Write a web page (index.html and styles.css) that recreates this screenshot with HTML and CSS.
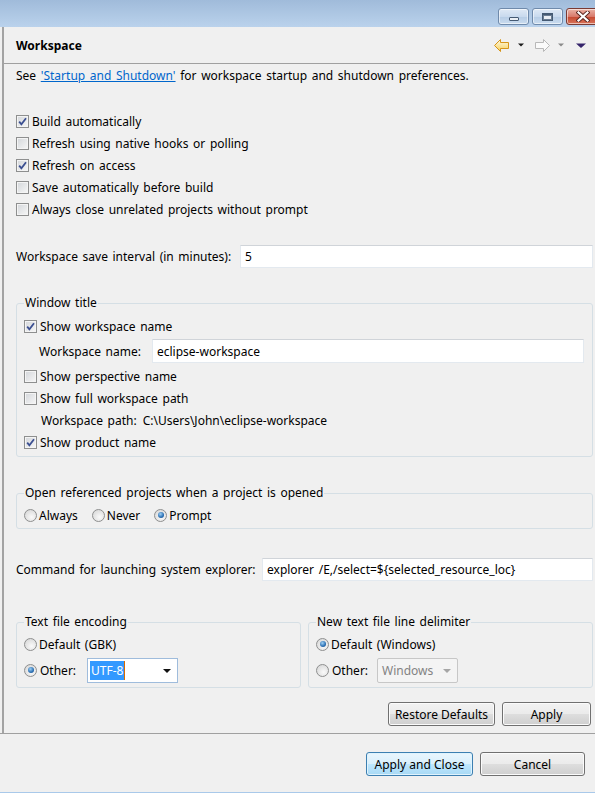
FILE: index.html
```html
<!DOCTYPE html>
<html>
<head>
<meta charset="utf-8">
<title>Workspace</title>
<link rel="stylesheet" href="styles.css">
</head>
<body>
<div class="window">
  <div class="titlebar">
    <div class="winbtns">
      <div class="wbtn wmin"><span class="min-glyph"></span></div>
      <div class="wbtn wmax"><span class="max-glyph"></span></div>
      <div class="wbtn wclose">
        <svg width="14" height="11" viewBox="0 0 14 11">
          <path d="M2.5 1.5 L11.5 9.5 M11.5 1.5 L2.5 9.5" stroke="#5a2620" stroke-width="4" stroke-linecap="square"/>
          <path d="M2.5 1.5 L11.5 9.5 M11.5 1.5 L2.5 9.5" stroke="#ffffff" stroke-width="2.2" stroke-linecap="square"/>
        </svg>
      </div>
    </div>
  </div>

  <div class="page">
    <div class="header">
      <h1 class="title">Workspace</h1>
      <div class="nav">
        <svg width="93" height="14" viewBox="0 0 93 14">
          <defs>
            <linearGradient id="bk" x1="0" y1="0" x2="0" y2="1">
              <stop offset="0" stop-color="#fffbe6"/>
              <stop offset="1" stop-color="#f6cf5a"/>
            </linearGradient>
          </defs>
          <path d="M0.5 6.5 L6.5 0.5 L6.5 3.5 L14.5 3.5 L14.5 9.5 L6.5 9.5 L6.5 12.5 Z" fill="url(#bk)" stroke="#d6951a" stroke-linejoin="round"/>
          <path d="M24 4.5 L30 4.5 L27 7.5 Z" fill="#1b1b1b"/>
          <path d="M55.5 6.5 L49.5 0.5 L49.5 3.5 L41.5 3.5 L41.5 9.5 L49.5 9.5 L49.5 12.5 Z" fill="#fafafa" stroke="#b8b8b8" stroke-linejoin="round"/>
          <path d="M64 4.5 L70 4.5 L67 7.5 Z" fill="#8a8a8a"/>
          <path d="M82 4.5 L92 4.5 L87 9 Z" fill="#35246b"/>
        </svg>
      </div>
    </div>

    <div class="content">
      <p class="intro">See <a class="link" href="#">'Startup and Shutdown'</a> for workspace startup and shutdown preferences.</p>

      <div class="checks">
        <div class="row"><span class="cb on"><svg width="11" height="11" viewBox="0 0 11 11"><path d="M2.2 5.6 L4.4 8.3 L9 2.2" fill="none" stroke="#3b4f91" stroke-width="1.8"/></svg></span>Build automatically</div>
        <div class="row"><span class="cb"></span>Refresh using native hooks or polling</div>
        <div class="row"><span class="cb on"><svg width="11" height="11" viewBox="0 0 11 11"><path d="M2.2 5.6 L4.4 8.3 L9 2.2" fill="none" stroke="#3b4f91" stroke-width="1.8"/></svg></span>Refresh on access</div>
        <div class="row"><span class="cb"></span>Save automatically before build</div>
        <div class="row"><span class="cb"></span>Always close unrelated projects without prompt</div>
      </div>

      <div class="field-row interval">
        <span class="lbl lbl-interval">Workspace save interval (in minutes):</span>
        <span class="tf">5</span>
      </div>

      <fieldset class="group wt">
        <legend>Window title</legend>
        <div class="row"><span class="cb on"><svg width="11" height="11" viewBox="0 0 11 11"><path d="M2.2 5.6 L4.4 8.3 L9 2.2" fill="none" stroke="#3b4f91" stroke-width="1.8"/></svg></span>Show workspace name</div>
        <div class="field-row name-row">
          <span class="lbl lbl-name">Workspace name:</span>
          <span class="tf">eclipse-workspace</span>
        </div>
        <div class="row"><span class="cb"></span>Show perspective name</div>
        <div class="row"><span class="cb"></span>Show full workspace path</div>
        <div class="row path-row"><span class="lbl lbl-path">Workspace path:</span>C:\Users\John\eclipse-workspace</div>
        <div class="row"><span class="cb on"><svg width="11" height="11" viewBox="0 0 11 11"><path d="M2.2 5.6 L4.4 8.3 L9 2.2" fill="none" stroke="#3b4f91" stroke-width="1.8"/></svg></span>Show product name</div>
      </fieldset>

      <fieldset class="group refs">
        <legend>Open referenced projects when a project is opened</legend>
        <div class="row">
          <span class="opt"><span class="rb"></span>Always</span>
          <span class="opt"><span class="rb"></span>Never</span>
          <span class="opt"><span class="rb on"></span>Prompt</span>
        </div>
      </fieldset>

      <div class="field-row command">
        <span class="lbl lbl-cmd">Command for launching system explorer:</span>
        <span class="tf">explorer /E,/select=${selected_resource_loc}</span>
      </div>

      <div class="pair">
        <fieldset class="group enc">
          <legend>Text file encoding</legend>
          <div class="row"><span class="rb"></span><span class="rtext">Default (GBK)</span></div>
          <div class="row combo-row">
            <span class="rb on"></span><span class="rtext other-l">Other:</span>
            <span class="combo utf">
              <span class="sel">UTF-8</span><span class="caret"></span>
              <span class="arrow"></span>
            </span>
          </div>
        </fieldset>
        <fieldset class="group enc">
          <legend>New text file line delimiter</legend>
          <div class="row"><span class="rb on"></span><span class="rtext">Default (Windows)</span></div>
          <div class="row combo-row">
            <span class="rb"></span><span class="rtext other-r">Other:</span>
            <span class="combo disabled">
              <span class="val">Windows</span>
              <span class="arrow"></span>
            </span>
          </div>
        </fieldset>
      </div>

      <div class="page-buttons">
        <span class="btn btn-restore">Restore Defaults</span>
        <span class="btn btn-apply">Apply</span>
      </div>
    </div>
  </div>

  <div class="sep"></div>

  <div class="dialog-buttons">
    <span class="btn btn-default btn-applyclose">Apply and Close</span>
    <span class="btn btn-cancel">Cancel</span>
  </div>
</div>
</body>
</html>
```

FILE: styles.css
```css
* { box-sizing: border-box; }
html, body { margin: 0; padding: 0; }
body {
  width: 595px;
  height: 793px;
  overflow: hidden;
  background: #f0f0f0;
  font-family: "Noto Sans", "Open Sans", sans-serif;
  font-size: 12px;
  word-spacing: 1.5px;
  color: #000;
}

.window {
  height: 793px;
  display: flex;
  flex-direction: column;
  border-bottom: 1px solid #a9c9ea;
}

/* title bar */
.titlebar {
  height: 27px;
  flex: none;
  background: linear-gradient(#a0bbda, #bad2ec);
  display: flex;
  justify-content: flex-end;
  align-items: flex-start;
  padding-top: 8px;
  overflow: hidden;
}
.winbtns { display: flex; gap: 3px; margin-right: -14px; }
.wbtn {
  height: 17px;
  border: 1px solid #6f8aab;
  border-radius: 3px;
  display: flex;
  align-items: center;
  justify-content: center;
  box-shadow: inset 0 0 0 1px rgba(255, 255, 255, 0.55);
}
.wmin, .wmax {
  width: 31px;
  background: linear-gradient(#dfe9f5, #c9daee 50%, #b6cce5 51%, #cadcef);
}
.wclose {
  width: 43px;
  border-color: #7a3a33;
  background: linear-gradient(#eab3a6, #d8796a 50%, #c5472f 51%, #d8745a);
  justify-content: flex-start;
  padding-left: 9px;
}
.min-glyph {
  width: 10px;
  height: 4px;
  border: 1px solid #455a73;
  border-radius: 1px;
  background: #e9eef4;
  margin-top: 5px;
}
.max-glyph {
  width: 11px;
  height: 8px;
  border: 1px solid #455a73;
  border-top-width: 2px;
  background: #e9eef4;
  box-shadow: inset 0 0 0 1px #6a7d93;
}

/* page */
.page {
  height: 706px;
  flex: none;
  margin-left: 2px;
  border-left: 2px solid #a3a3a3;
  display: flex;
  flex-direction: column;
}
.header {
  height: 37px;
  flex: none;
  border-bottom: 1px solid #a0a0a0;
  display: flex;
  align-items: flex-start;
  padding: 11px 8px 0 12px;
}
.title {
  margin: 0;
  font-size: 12px;
  font-weight: bold;
  line-height: 16px;
  word-spacing: 0;
}
.nav { margin-left: auto; margin-top: 1px; display: flex; }
.nav svg { display: block; }

.content {
  flex: 1;
  padding: 0 2px 0 12px;
  display: flex;
  flex-direction: column;
}
.intro { margin: 4px 0 0; line-height: 16px; white-space: nowrap; }
.link { color: #0066cc; text-decoration: underline; }

.checks { margin-top: 26px; }
.row {
  height: 22px;
  display: flex;
  align-items: center;
  white-space: nowrap;
}

/* checkbox */
.cb {
  flex: none;
  width: 13px;
  height: 13px;
  margin-right: 3px;
  border: 1px solid #8e8f8f;
  background: linear-gradient(135deg, #d3d6da, #f7f7f7);
  box-shadow: inset 0 0 0 1px #f4f4f4;
}
.cb svg { display: block; }

/* radio */
.rb {
  flex: none;
  width: 13px;
  height: 13px;
  border-radius: 50%;
  border: 1px solid #8e8f8f;
  background: radial-gradient(circle at 60% 65%, #fafafa, #d2d2d2);
  display: flex;
  align-items: center;
  justify-content: center;
}
.rb.on::after {
  content: "";
  width: 6px;
  height: 6px;
  border-radius: 50%;
  background: radial-gradient(circle at 40% 35%, #9fd0f4, #2a6fb3 60%, #1b4a80);
}

/* text fields */
.field-row { display: flex; align-items: center; white-space: nowrap; }
.lbl { flex: none; }
.tf {
  flex: 1;
  min-width: 0;
  height: 23px;
  display: flex;
  align-items: center;
  padding-left: 4px;
  background: #fff;
  border: 1px solid #e3e9ef;
  border-top-color: #d0d4d9;
  overflow: hidden;
}

.interval { margin-top: 25px; height: 23px; }
.lbl-interval { width: 224px; }

/* group boxes */
.group {
  margin: 0;
  min-width: 0;
  border: 1px solid #d5dfe5;
  border-radius: 3px;
}
.group legend { padding: 0 1px; line-height: 16px; }

.wt { margin-top: 27px; padding: 4px 8px 3px 7px; }
.name-row { height: 24px; margin: 2px 0; padding-left: 15px; }
.name-row .tf { height: 24px; }
.lbl-name { width: 113px; }
.path-row { padding-left: 17px; }
.lbl-path { margin-right: 6px; }

.refs { margin-top: 28px; padding: 3px 8px 2px 7px; }
.opt { display: flex; align-items: center; margin-right: 14px; }
.opt .rb { margin-right: 2px; }

.command { margin-top: 29px; height: 23px; }
.lbl-cmd { width: 246px; }

.pair {
  margin-top: 33px;
  display: grid;
  grid-template-columns: 1fr 1fr;
  gap: 7px;
}
.enc { padding: 3px 8px 4px 7px; }
.rtext { margin-left: 2px; }
.combo-row { height: 26px; margin-top: 2px; }
.other-l { width: 47px; margin-left: 3px; }
.other-r { width: 45px; margin-left: 3px; }

.combo {
  flex: none;
  height: 25px;
  display: flex;
  align-items: center;
  position: relative;
  padding-left: 2px;
}
.combo.utf {
  width: 91px;
  background: #fff;
  border: 1px solid #9fbcdc;
}
.combo .sel {
  background: #3399ff;
  color: #fff;
  line-height: 19px;
  padding: 0 1px;
}
.combo .caret {
  width: 1px;
  height: 19px;
  background: #d86b00;
}
.combo .arrow {
  position: absolute;
  right: 6px;
  top: 10px;
  width: 0;
  height: 0;
  border-left: 4px solid transparent;
  border-right: 4px solid transparent;
  border-top: 4px solid #111;
}
.combo.disabled {
  width: 81px;
  border: 1px solid #c7c7c7;
  border-radius: 2px;
  background: #f4f4f4;
  color: #838383;
  padding-left: 4px;
}
.combo.disabled .arrow { border-top-color: #a6a6a6; }

/* buttons */
.page-buttons {
  margin-top: 14px;
  display: flex;
  justify-content: flex-end;
  gap: 7px;
  padding-right: 2px;
}
.btn {
  height: 24px;
  display: flex;
  align-items: center;
  justify-content: center;
  border: 1px solid #707070;
  border-radius: 3px;
  background: linear-gradient(#f2f2f2, #ebebeb 48%, #dddddd 52%, #cfcfcf);
  box-shadow: inset 0 0 0 1px #fbfbfb;
  white-space: nowrap;
  word-spacing: 0;
}
.btn-restore { width: 107px; }
.btn-apply { width: 89px; }
.btn-default {
  border-color: #3c7fb1;
  background: linear-gradient(#eaf6fd, #d9f0fc 48%, #bee6fd 52%, #a7d9f5);
  box-shadow: inset 0 0 0 1px #dff3fd;
}
.btn-applyclose { width: 107px; }
.btn-cancel { width: 105px; }

.sep { height: 1px; flex: none; background: #a0a0a0; }

.dialog-buttons {
  flex: 1;
  display: flex;
  justify-content: flex-end;
  align-items: flex-start;
  gap: 7px;
  padding: 18px 10px 0 0;
}
```
